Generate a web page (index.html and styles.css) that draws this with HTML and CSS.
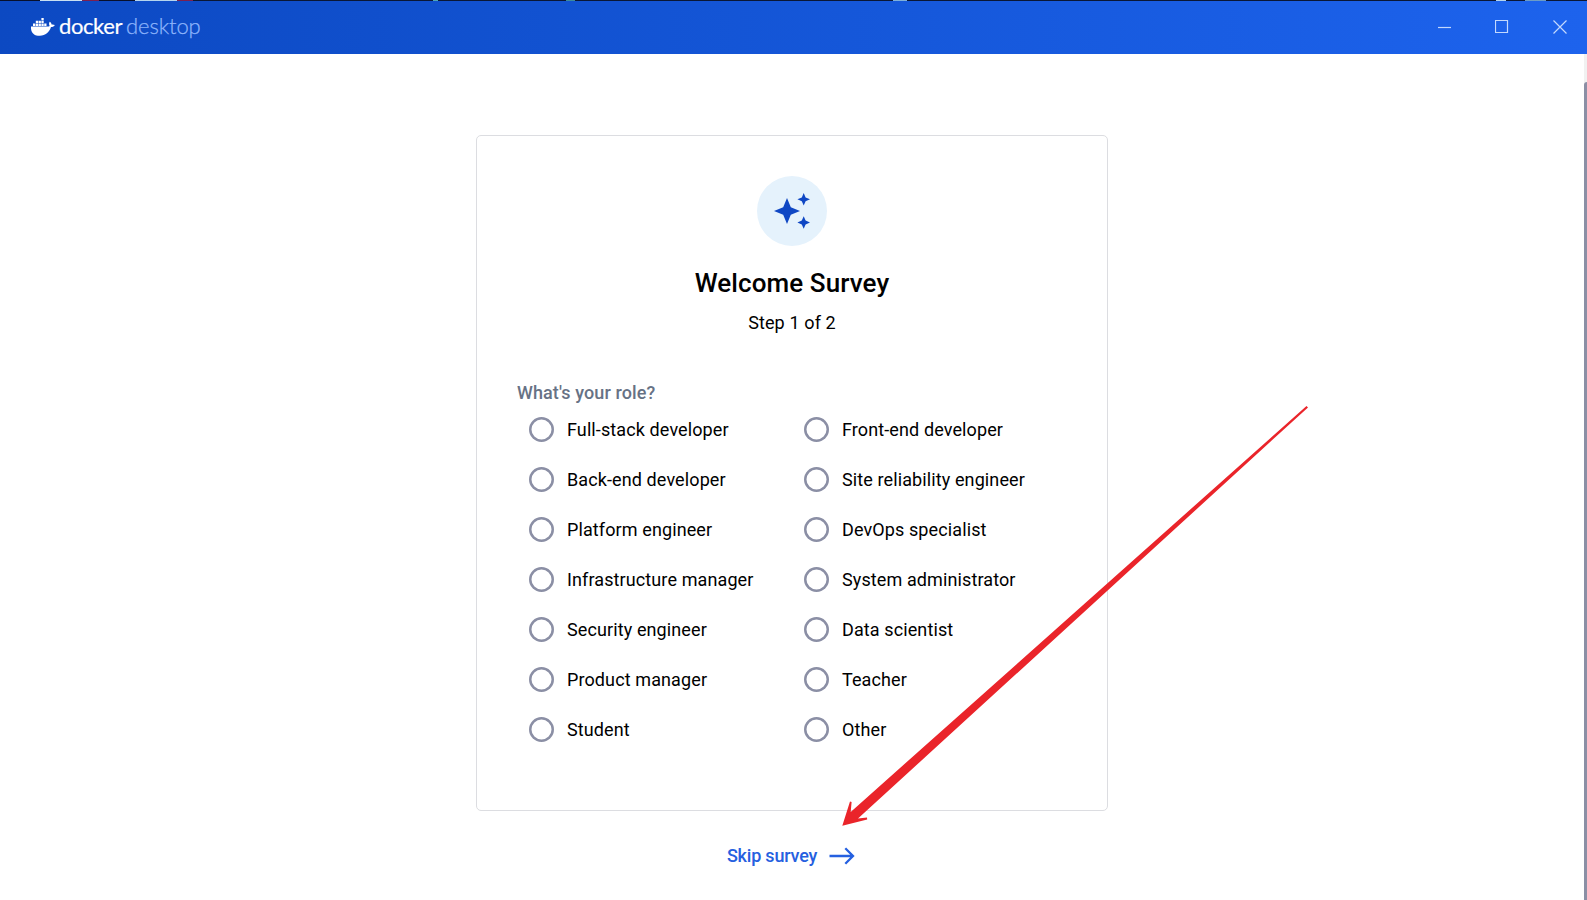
FILE: index.html
```
<!DOCTYPE html>
<html lang="en">
<head>
<meta charset="utf-8">
<title>Docker Desktop</title>
<link rel="stylesheet" href="styles.css">
</head>
<body>
<div class="window">
  <header class="titlebar">
    <div class="brand">
      <svg class="whale" width="24" height="18" viewBox="0 0 24 18" fill="#fff">
        <path d="M0 8.600h16.700c.8 0 1.500-.2 2-.6-.8-1.200-.9-2.900 0-4.300 1.200.7 1.800 1.700 1.900 2.800 1-.2 2.200-.1 3.200.6-.7 1.500-2 2-3.800 2C18.300 14.400 14.500 17.800 8.800 17.800 3.300 17.800-.4 15 0 8.600z"/>
        <path d="M2 5.600h2.300v2.300H2zM4.800 5.600h2.300v2.300H4.800zM7.600 5.600h2.300v2.300H7.600zM10.400 5.600h2.300v2.300h-2.300zM13.200 5.600h2.300v2.300h-2.300zM4.800 2.800h2.300v2.300H4.800zM7.600 2.800h2.300v2.300H7.600zM10.400 2.800h2.300v2.300h-2.300zM10.400 0h2.300v2.300h-2.300z"/>
      </svg>
      <span class="docker">docker</span>
      <span class="desktop">desktop</span>
    </div>
    <div class="controls">
      <svg width="14" height="14" viewBox="0 0 14 14"><path d="M1 7.500h13"/></svg>
      <svg width="14" height="14" viewBox="0 0 14 14"><path d="M.5.500h12v12H.5z"/></svg>
      <svg width="14" height="14" viewBox="0 0 14 14"><path d="M.5.500l13 13M13.500.500l-13 13"/></svg>
    </div>
  </header>
  <div class="body">
    <main class="content">
      <section class="card">
        <div class="badge">
          <svg width="70" height="70" viewBox="0 0 70 70" fill="#0f47c4">
            <path d="M30 22l3.800 9.200L43 35l-9.200 3.800L30 48l-3.800-9.200L17 35l9.200-3.800z"/>
            <path d="M46.700 17l1.900 4.400 4.400 1.900-4.400 1.900-1.900 4.400-1.900-4.400-4.400-1.900 4.400-1.900z"/>
            <path d="M46.700 40.200l1.900 4.400 4.400 1.900-4.400 1.900-1.900 4.400-1.900-4.400-4.400-1.900 4.400-1.900z"/>
          </svg>
        </div>
        <h1 class="title">Welcome Survey</h1>
        <p class="step">Step 1 of 2</p>
        <p class="question">What's your role?</p>
        <div class="roles">
          <label class="role"><span class="radio"></span>Full-stack developer</label>
          <label class="role"><span class="radio"></span>Front-end developer</label>
          <label class="role"><span class="radio"></span>Back-end developer</label>
          <label class="role"><span class="radio"></span>Site reliability engineer</label>
          <label class="role"><span class="radio"></span>Platform engineer</label>
          <label class="role"><span class="radio"></span>DevOps specialist</label>
          <label class="role"><span class="radio"></span>Infrastructure manager</label>
          <label class="role"><span class="radio"></span>System administrator</label>
          <label class="role"><span class="radio"></span>Security engineer</label>
          <label class="role"><span class="radio"></span>Data scientist</label>
          <label class="role"><span class="radio"></span>Product manager</label>
          <label class="role"><span class="radio"></span>Teacher</label>
          <label class="role"><span class="radio"></span>Student</label>
          <label class="role"><span class="radio"></span>Other</label>
        </div>
      </section>
      <a class="skip">Skip survey
        <svg width="26" height="18" viewBox="0 0 26 18"><path d="M.5 9h23.500M16.300 1.300L24 9l-7.700 7.700"/></svg>
      </a>
    </main>
    <div class="scrollbar"><div class="thumb"></div></div>
  </div>
  <svg class="pointer" width="1587" height="900" viewBox="0 0 1587 900" fill="#ea242a">
    <path d="M842.300 825.800L850 801.500l1.600.6-.9 9.800L1306.500 406l1.500 1.400L858 818.500l9-.9.200 1.900z"/>
  </svg>
</div>
</body>
</html>
```
FILE: styles.css
```
* { box-sizing: border-box; }
body {
  margin: 0;
  font-family: Roboto, "Liberation Sans", sans-serif;
  color: #000;
  background: #fff;
}
.window {
  position: relative;
  display: flex;
  flex-direction: column;
  height: 900px;
  overflow: hidden;
}
.titlebar {
  display: flex;
  justify-content: space-between;
  flex: none;
  height: 54px;
  padding: 0 20px 0 31px;
  border-top: 1px solid;
  border-image: linear-gradient(90deg, #07102c 0 41px, #c9e0f2 41px 83px, #7c2050 83px 100px, #07102c 100px 136px, #b5d5ee 136px 178px, #7c2050 178px 194px, #0a1735 194px 433px, #4fa6b5 433px 438px, #0a1735 438px 566px, #3c8b9c 566px 575px, #0a1735 575px 893px, #7fb0da 893px 907px, #0a1735 907px 1495px, #b5d5ee 1495px 1505px, #0a1735 1505px 1524px, #6c9cc5 1524px 1545px, #0a1735 1545px) 1;
  background: linear-gradient(90deg, #0c49c2, #1d63ed);
}
.brand {
  display: flex;
  align-items: center;
  height: 50px;
  font-family: Lato, sans-serif;
  font-size: 22px;
  line-height: 30px;
  color: #fff;
}
.whale { margin: 1px 4px 0 0; }
.docker { width: 67px; letter-spacing: -.4px; -webkit-text-stroke: .2px #fff; }
.desktop { color: #8db4fb; font-weight: 300; letter-spacing: -.1px; -webkit-text-stroke: .25px #8db4fb; }
.controls {
  display: flex;
  align-items: center;
  gap: 44px;
  height: 52px;
}
.controls svg { fill: none; stroke: #c3d8fd; stroke-width: 1.200; }
.body { display: flex; flex: 1; min-height: 0; }
.content {
  display: flex;
  flex: 1;
  flex-direction: column;
  align-items: center;
  padding-top: 81px;
}
.card {
  display: flex;
  flex-direction: column;
  align-items: center;
  flex: none;
  width: 632px;
  height: 676px;
  padding: 40px;
  border: 1px solid #dcdde1;
  border-radius: 5px;
}
.badge { width: 70px; height: 70px; border-radius: 50%; background: #e5f2fc; }
.title { margin: 20px 0 0; font-size: 26px; line-height: 34px; font-weight: 500; letter-spacing: .1px; }
.step { margin: 11px 0 0; font-size: 18px; line-height: 24px; letter-spacing: .12px; }
.question {
  align-self: flex-start;
  margin: 46px 0 0;
  font-size: 18px;
  line-height: 24px;
  font-weight: 500;
  letter-spacing: .1px;
  color: #677285;
}
.roles {
  display: grid;
  grid-template-columns: 275px 275px;
  grid-auto-rows: 50px;
  align-self: flex-start;
  margin-top: -1px;
  padding-left: 12.300px;
}
.role {
  display: flex;
  align-items: center;
  gap: 12.700px;
  font-size: 18px;
  letter-spacing: .11px;
}
.radio { width: 25px; height: 25px; margin-top: 1px; box-shadow: inset 0 0 0 2.500px #8b8fa5; border-radius: 50%; }
.skip {
  display: flex;
  align-items: center;
  gap: 12px;
  height: 24px;
  margin: 32px 2px 0 0;
  font-size: 18px;
  font-weight: 500;
  letter-spacing: -.2px;
  color: #2560e0;
}
.skip svg { margin-top: 1px; fill: none; stroke: currentColor; stroke-width: 2.300; }
.scrollbar { width: 3px; padding-top: 28px; background: #f1f1f1; }
.thumb { height: 100%; background: #8b8fa5; border-top-left-radius: 3px; }
.pointer { position: absolute; top: 0; left: 0; pointer-events: none; }
```
